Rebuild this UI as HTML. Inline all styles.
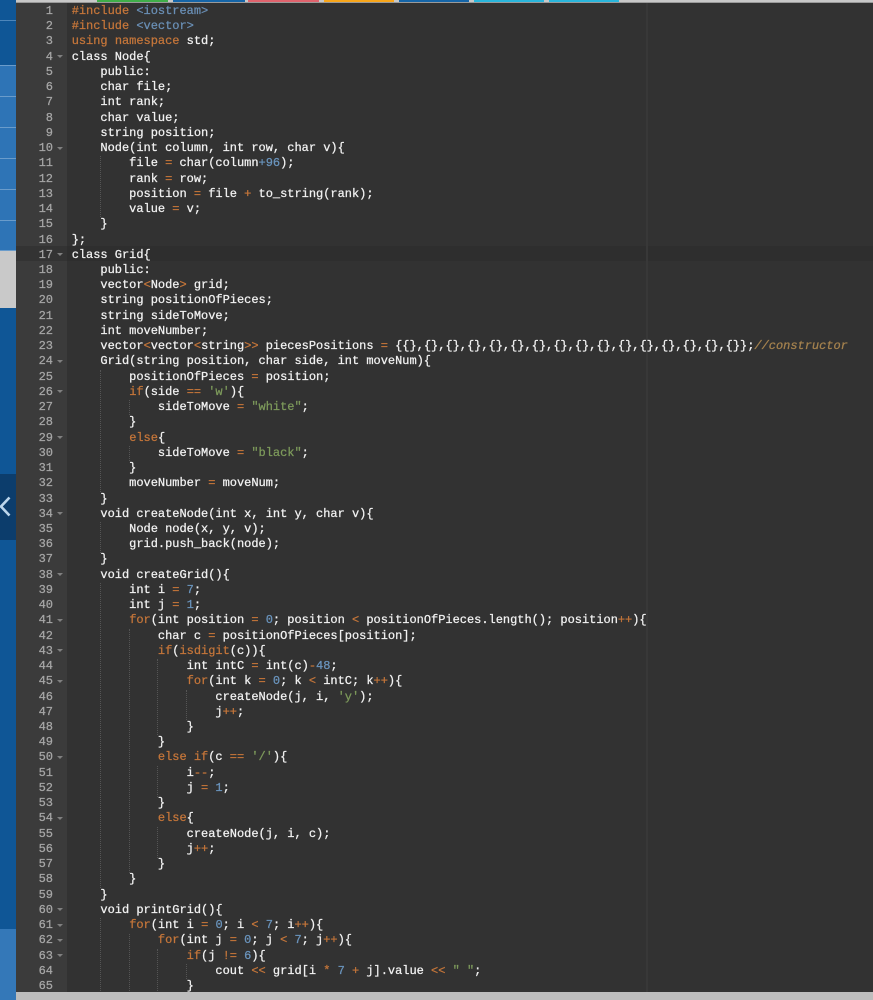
<!DOCTYPE html>
<html>
<head>
<meta charset="utf-8">
<style>
html,body{margin:0;padding:0;width:873px;height:1000px;overflow:hidden;background:#c8c8c8}
.a{position:absolute}
#ed{left:16px;top:3px;width:857px;height:989px;background:#323232;overflow:hidden}
#gut{left:0;top:0;width:51px;height:989px;background:#3b3b3b}
#act{left:0;top:243px;width:857px;height:15px;background:#2e2e2e}
#actg{left:0;top:243px;width:51px;height:15px;background:#333333}
#pm{left:630px;top:0;width:2px;height:989px;background:#383838}
#nums{left:0;top:1px;width:37px;text-align:right;color:#a6a6a6}
pre{margin:0;font:12px/15.234px "Liberation Mono",monospace;-webkit-text-stroke:.25px}
#code{left:55.7px;top:1px;color:#f2f2f2;font-weight:400;letter-spacing:-.015px;white-space:pre}
.g{position:absolute;width:0;border-left:1px dotted #555555}
.f{position:absolute;left:41px;width:0;height:0;border-left:3px solid transparent;border-right:3px solid transparent;border-top:3px solid #808080}
b,u,s,q,em{font-weight:400;text-decoration:none;font-style:normal}
q{quotes:none}
b{color:#c5763a}
u{color:#c5763a}
s{color:#6a94bd}
q{color:#7d9a5b}
em{color:#a5824e;font-style:italic}
i.p{font-style:normal;color:#6a8fb5}
.l{position:absolute;left:0;width:16px;height:1px;background:#6a9ccb}
</style>
</head>
<body>
<div class="a" style="left:0;top:0;width:16px;height:1000px;background:#0f5696"></div>
<div class="a" style="left:0;top:65px;width:16px;height:185px;background:#2e74b6"></div>
<div class="l" style="top:20px;background:#4e86ba"></div>
<div class="l" style="top:65px"></div><div class="l" style="top:96px"></div><div class="l" style="top:127px"></div><div class="l" style="top:158px"></div><div class="l" style="top:189px"></div><div class="l" style="top:220px"></div><div class="l" style="top:250px"></div>
<div class="a" style="left:0;top:251px;width:16px;height:57px;background:#c9c9c9"></div>
<div class="a" style="left:0;top:474px;width:16px;height:66px;background:#0c3d6c"></div>
<svg class="a" style="left:0;top:495px" width="16" height="24" viewBox="0 0 16 24"><path d="M9.5 2.5 L1 11.5 L9.5 20.5" fill="none" stroke="#bcd6ec" stroke-width="2.6"/></svg>
<div class="a" style="left:0;top:929px;width:16px;height:71px;background:#3478b8"></div>

<div class="a" style="left:97px;top:0;width:71px;height:2px;background:#3fae49"></div>
<div class="a" style="left:173px;top:0;width:72px;height:2px;background:#1565a8"></div>
<div class="a" style="left:248px;top:0;width:71px;height:2px;background:#e0636d"></div>
<div class="a" style="left:324px;top:0;width:70px;height:2px;background:#f9a61a"></div>
<div class="a" style="left:399px;top:0;width:70px;height:2px;background:#1565a8"></div>
<div class="a" style="left:474px;top:0;width:70px;height:2px;background:#29b6dc"></div>
<div class="a" style="left:549px;top:0;width:70px;height:2px;background:#29b6dc"></div>
<div class="a" style="left:16px;top:2px;width:857px;height:1px;background:#9a9a9a"></div>

<div id="ed" class="a">
<div id="gut" class="a"></div>
<div id="act" class="a"></div>
<div id="actg" class="a"></div>
<div id="pm" class="a"></div>
<pre id="nums" class="a">1
2
3
4
5
6
7
8
9
10
11
12
13
14
15
16
17
18
19
20
21
22
23
24
25
26
27
28
29
30
31
32
33
34
35
36
37
38
39
40
41
42
43
44
45
46
47
48
49
50
51
52
53
54
55
56
57
58
59
60
61
62
63
64
65</pre>
<div class="f" style="top:52px"></div>
<div class="f" style="top:144px"></div>
<div class="f" style="top:250px"></div>
<div class="f" style="top:357px"></div>
<div class="f" style="top:387px"></div>
<div class="f" style="top:433px"></div>
<div class="f" style="top:509px"></div>
<div class="f" style="top:570px"></div>
<div class="f" style="top:616px"></div>
<div class="f" style="top:646px"></div>
<div class="f" style="top:677px"></div>
<div class="f" style="top:753px"></div>
<div class="f" style="top:814px"></div>
<div class="f" style="top:905px"></div>
<div class="f" style="top:921px"></div>
<div class="f" style="top:936px"></div>
<div class="f" style="top:951px"></div>
<div class="g" style="left:84px;top:153px;height:61px"></div>
<div class="g" style="left:84px;top:367px;height:122px"></div>
<div class="g" style="left:84px;top:519px;height:31px"></div>
<div class="g" style="left:84px;top:580px;height:305px"></div>
<div class="g" style="left:84px;top:915px;height:75px"></div>
<div class="g" style="left:113px;top:397px;height:15px"></div>
<div class="g" style="left:113px;top:443px;height:15px"></div>
<div class="g" style="left:113px;top:626px;height:244px"></div>
<div class="g" style="left:113px;top:931px;height:59px"></div>
<div class="g" style="left:141px;top:656px;height:76px"></div>
<div class="g" style="left:141px;top:763px;height:31px"></div>
<div class="g" style="left:141px;top:824px;height:31px"></div>
<div class="g" style="left:141px;top:946px;height:44px"></div>
<div class="g" style="left:170px;top:687px;height:30px"></div>
<div class="g" style="left:170px;top:961px;height:15px"></div>
<pre id="code" class="a"><b>#include</b> <i class="p">&lt;iostream&gt;</i>
<b>#include</b> <i class="p">&lt;vector&gt;</i>
<b>using</b> <b>namespace</b> std;
class Node{
    public:
    char file;
    int rank;
    char value;
    string position;
    Node(int column, int row, char v){
        file <u>=</u> char(column<s>+96</s>);
        rank <u>=</u> row;
        position <u>=</u> file <u>+</u> to_string(rank);
        value <u>=</u> v;
    }
};
class Grid{
    public:
    vector<u>&lt;</u>Node<u>&gt;</u> grid;
    string positionOfPieces;
    string sideToMove;
    int moveNumber;
    vector<u>&lt;</u>vector<u>&lt;</u>string<u>&gt;&gt;</u> piecesPositions <u>=</u> {{},{},{},{},{},{},{},{},{},{},{},{},{},{},{},{}};<em>//constructor</em>
    Grid(string position, char side, int moveNum){
        positionOfPieces <u>=</u> position;
        <b>if</b>(side <u>==</u> <q>'w'</q>){
            sideToMove <u>=</u> <q>"white"</q>;
        }
        <b>else</b>{
            sideToMove <u>=</u> <q>"black"</q>;
        }
        moveNumber <u>=</u> moveNum;
    }
    void createNode(int x, int y, char v){
        Node node(x, y, v);
        grid.push_back(node);
    }
    void createGrid(){
        int i <u>=</u> <s>7</s>;
        int j <u>=</u> <s>1</s>;
        <b>for</b>(int position <u>=</u> <s>0</s>; position <u>&lt;</u> positionOfPieces.length(); position<u>++</u>){
            char c <u>=</u> positionOfPieces[position];
            <b>if</b>(<b>isdigit</b>(c)){
                int intC <u>=</u> int(c)<u>-</u><s>48</s>;
                <b>for</b>(int k <u>=</u> <s>0</s>; k <u>&lt;</u> intC; k<u>++</u>){
                    createNode(j, i, <q>'y'</q>);
                    j<u>++</u>;
                }
            }
            <b>else</b> <b>if</b>(c <u>==</u> <q>'/'</q>){
                i<u>--</u>;
                j <u>=</u> <s>1</s>;
            }
            <b>else</b>{
                createNode(j, i, c);
                j<u>++</u>;
            }
        }
    }
    void printGrid(){
        <b>for</b>(int i <u>=</u> <s>0</s>; i <u>&lt;</u> <s>7</s>; i<u>++</u>){
            <b>for</b>(int j <u>=</u> <s>0</s>; j <u>&lt;</u> <s>7</s>; j<u>++</u>){
                <b>if</b>(j <u>!=</u> <s>6</s>){
                    cout <u>&lt;&lt;</u> grid[i <u>*</u> <s>7</s> <u>+</u> j].value <u>&lt;&lt;</u> <q>" "</q>;
                }</pre>
</div>
<div class="a" style="left:16px;top:992px;width:857px;height:8px;background:#bdbdbd"></div>
</body>
</html>
